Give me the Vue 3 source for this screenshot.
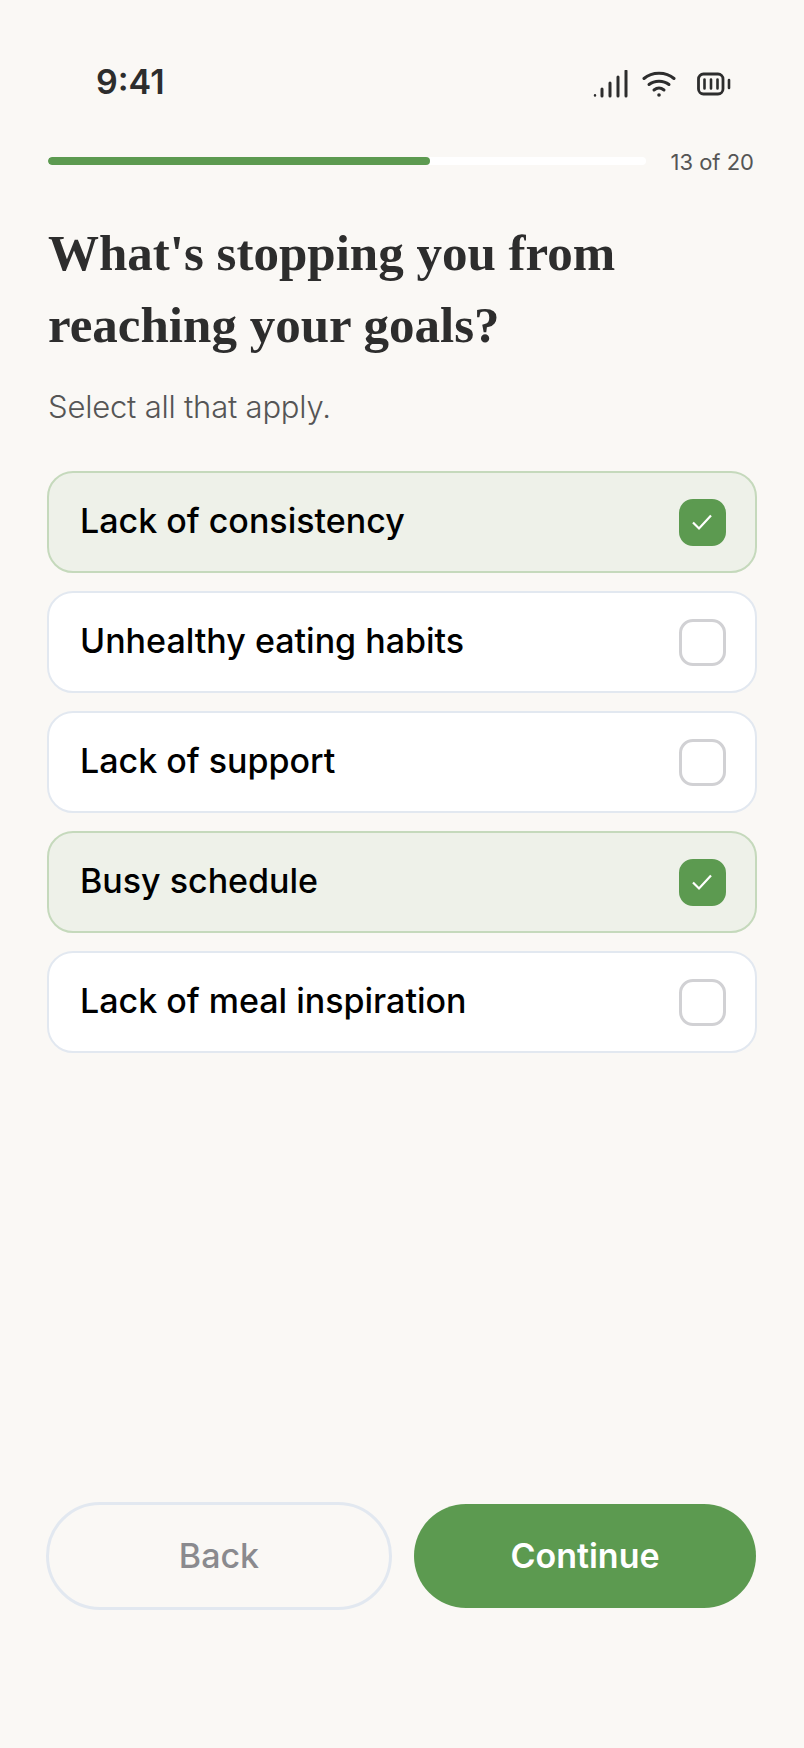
<template>
  <div class="screen">
    <div class="status-bar">
      <span class="time">9:41</span>
      <div class="status-icons">
        <svg class="signal" width="36" height="28" viewBox="0 0 36 28" fill="none" stroke="#2d2d2d" stroke-linecap="round">
          <path d="M2 25.2v.3" stroke-width="2.4" />
          <path d="M9 19v7M17 13v13M25 7v19M33 1v25" stroke-width="3" />
        </svg>
        <svg class="wifi" width="34" height="28" viewBox="0 0 34 28" fill="none" stroke="#2d2d2d" stroke-width="3" stroke-linecap="round">
          <path d="M2 8.500C10 1.500 24 1.500 32 8.500" />
          <path d="M7 14.500C12.500 10 21.500 10 27 14.500" />
          <path d="M12 20C15 17.700 19 17.700 22 20" />
          <circle cx="17" cy="25" r="1.800" fill="#2d2d2d" stroke="none" />
        </svg>
        <svg class="battery" width="34" height="24" viewBox="0 0 34 24" fill="none" stroke="#2d2d2d" stroke-linecap="round">
          <rect x="1.500" y="2" width="24.500" height="20" rx="5" stroke-width="2.800" />
          <path d="M7.500 7.500v9M14 7.500v9M20.500 7.500v9M32 8v8" stroke-width="2.600" />
        </svg>
      </div>
    </div>

    <div class="progress-row">
      <div class="progress-track">
        <div class="progress-fill" :style="{ width: progress + '%' }"></div>
      </div>
      <span class="progress-label">{{ step }} of {{ total }}</span>
    </div>

    <h1 class="title">What's stopping you from reaching your goals?</h1>
    <p class="subtitle">Select all that apply.</p>

    <div class="options">
      <div
        v-for="option in options"
        :key="option.label"
        :class="['option', { selected: option.selected }]"
        @click="option.selected = !option.selected"
      >
        <span class="option-label">{{ option.label }}</span>
        <span class="checkbox">
          <svg v-if="option.selected" width="22" height="18" viewBox="0 0 22 18" fill="none" stroke="#fff" stroke-width="2.200">
            <path d="M2 9.500l6 6L20 2.500" />
          </svg>
        </span>
      </div>
    </div>

    <div class="actions">
      <button class="btn btn-back">Back</button>
      <button class="btn btn-continue">Continue</button>
    </div>
  </div>
</template>

<script setup>
import { ref } from 'vue';

const step = 13;
const total = 20;
const progress = 63.900;

const options = ref([
  { label: 'Lack of consistency', selected: true },
  { label: 'Unhealthy eating habits', selected: false },
  { label: 'Lack of support', selected: false },
  { label: 'Busy schedule', selected: true },
  { label: 'Lack of meal inspiration', selected: false }
]);
</script>

<style>
html,
body {
  margin: 0;
  background: #faf8f5;
}
</style>

<style scoped>
.screen {
  box-sizing: border-box;
  width: 804px;
  height: 1748px;
  padding: 0 48px;
  display: flex;
  flex-direction: column;
  background: #faf8f5;
  font-family: Inter, "Liberation Sans", sans-serif;
}

.status-bar {
  height: 157px;
  display: flex;
  justify-content: space-between;
  align-items: flex-start;
  padding: 61px 25px 0 48px;
  box-sizing: border-box;
}

.time {
  font-size: 34px;
  line-height: 42px;
  font-weight: 600;
  color: #2d2d2d;
}

.status-icons {
  display: flex;
  align-items: center;
  gap: 13px;
  margin-top: 9px;
}

.battery {
  margin-left: 8px;
}

.progress-row {
  display: flex;
  align-items: center;
  gap: 24px;
  height: 8px;
}

.progress-track {
  flex: 1;
  height: 8px;
  border-radius: 4px;
  background: #fff;
  overflow: hidden;
}

.progress-fill {
  height: 100%;
  border-radius: 4px;
  background: #5c9a50;
}

.progress-label {
  font-size: 22px;
  line-height: 26px;
  color: #555;
  white-space: nowrap;
  margin: 2px 2px 0 0;
}

.title {
  margin: 52px 0 0;
  font-family: "Liberation Serif", serif;
  font-size: 51px;
  line-height: 72px;
  font-weight: 700;
  color: #2d2d2d;
  max-width: 640px;
}

.subtitle {
  margin: 26px 0 0;
  font-family: Inter, sans-serif;
  font-size: 31px;
  line-height: 40px;
  font-weight: 300;
  letter-spacing: -0.2px;
  color: #555;
}

.options {
  margin: 44px -1px 0;
  display: flex;
  flex-direction: column;
  gap: 18px;
}

.option {
  box-sizing: border-box;
  height: 102px;
  padding: 0 29.500px 0 31px;
  display: flex;
  justify-content: space-between;
  align-items: center;
  background: #fff;
  border: 2px solid #e2e8f0;
  border-radius: 26px;
  cursor: pointer;
}

.option.selected {
  background: #eef1e9;
  border-color: #c5d9bc;
}

.option-label {
  font-size: 34px;
  font-weight: 500;
  color: #000;
  margin-bottom: 3px;
}

.checkbox {
  box-sizing: border-box;
  width: 47px;
  height: 47px;
  display: flex;
  align-items: center;
  justify-content: center;
  border: 3px solid #d1d1d4;
  border-radius: 14px;
}

.selected .checkbox {
  background: #5c9a50;
  border-color: #5c9a50;
}

.actions {
  margin-top: auto;
  margin-bottom: 140px;
  display: flex;
  align-items: center;
  gap: 24px;
}

.btn {
  flex: 1;
  box-sizing: border-box;
  height: 104px;
  padding: 0 0 2px;
  border: none;
  border-radius: 52px;
  font-family: inherit;
  font-size: 34px;
  font-weight: 600;
  cursor: pointer;
}

.btn-back {
  background: transparent;
  outline: 3px solid #e2e8f0;
  outline-offset: -1.500px;
  font-weight: 500;
  color: #8a8a8e;
}

.btn-continue {
  background: #5c9a50;
  color: #fff;
}
</style>
